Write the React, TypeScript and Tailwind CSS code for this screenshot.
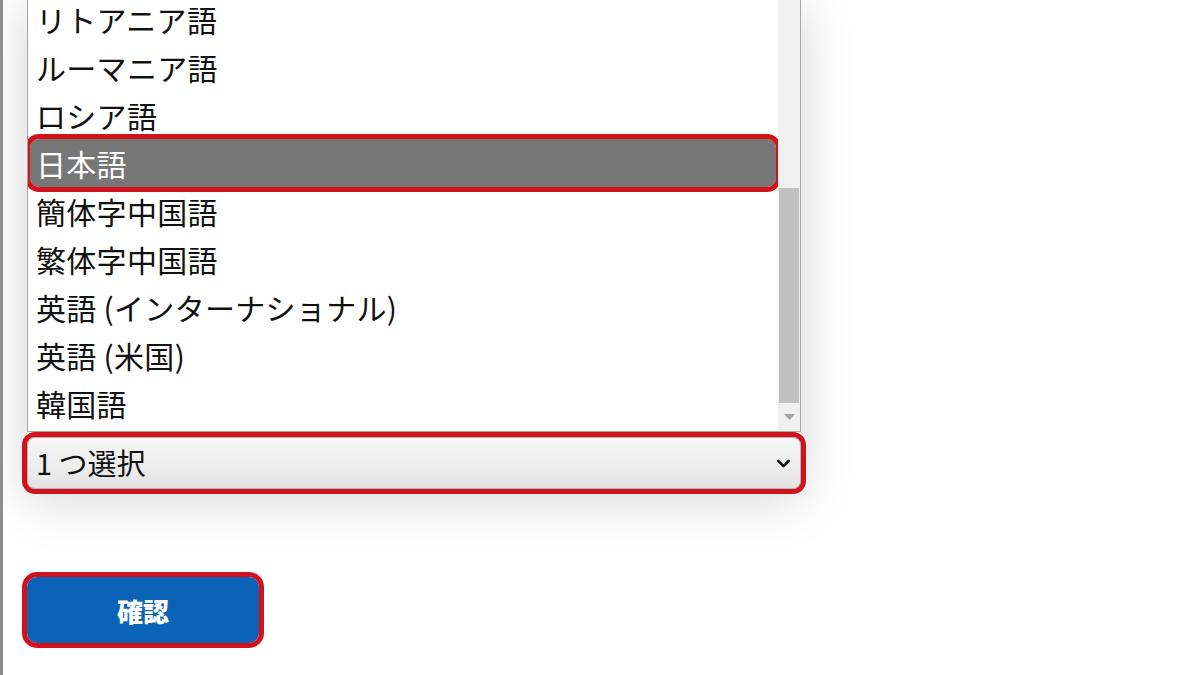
import { ChevronDown } from 'lucide-react'

const LANGUAGES = [
  'リトアニア語',
  'ルーマニア語',
  'ロシア語',
  '日本語',
  '簡体字中国語',
  '繁体字中国語',
  '英語 (インターナショナル)',
  '英語 (米国)',
  '韓国語',
]

const SELECTED = '日本語'

const FONT = "font-['Meiryo','Noto_Sans_CJK_JP',sans-serif]"

export default function App() {
  return (
    <div className={`w-[1200px] h-[675px] overflow-hidden bg-white border-l-[3px] border-[#8c8c8c] ${FONT}`}>
      <div className="pl-[24px] flex flex-col">
        {/* Dropdown: list + select */}
        <div className="w-[774px] flex flex-col gap-[5px] -mt-[6px] shadow-[0_10px_50px_rgba(0,0,0,0.17)]">
          <div className="h-[438px] flex border border-[#a6a6a6] bg-white overflow-hidden">
            <ul className="flex-1 flex flex-col pr-[2px] pl-[2px]">
              {LANGUAGES.map((lang) => (
                <li
                  key={lang}
                  className={`h-[48px] shrink-0 flex items-center px-[6px] text-[30px] leading-none tracking-[0.3px] ${
                    lang === SELECTED
                      ? 'bg-[#777777] text-white rounded-[9px] outline-[5px] outline-[#d2121b]'
                      : 'text-[#111111]'
                  }`}
                >
                  {lang}
                </li>
              ))}
            </ul>
            {/* Scrollbar */}
            <div className="w-[22px] bg-[#f0f0f0] flex flex-col">
              <div className="h-[193px]" />
              <div className="h-[215px] mx-[1px] bg-[#c1c1c1]" />
              <div className="flex-1 flex items-center justify-center">
                <svg width="11" height="6" viewBox="0 0 11 6">
                  <path d="M0 0 L11 0 L5.5 6 Z" fill="#a3a3a3" />
                </svg>
              </div>
            </div>
          </div>
          <div className="h-[52px] flex items-center justify-between pl-[8px] pr-[6px] border border-[#b5b5b5] rounded-[8px] bg-gradient-to-b from-[#f7f7f7] to-[#e4e4e4] outline-[5px] outline-[#d2121b]">
            <span className="text-[29px] text-[#111111]">1 つ選択</span>
            <ChevronDown className="w-[21px] h-[21px] text-[#111111]" strokeWidth={3.2} />
          </div>
        </div>

        {/* Confirm button */}
        <button className="mt-[88px] w-[232px] h-[66px] rounded-[10px] bg-[#0a63b6] text-white text-[26px] font-black outline-[5px] outline-[#d2121b]">
          確認
        </button>
      </div>
    </div>
  )
}
